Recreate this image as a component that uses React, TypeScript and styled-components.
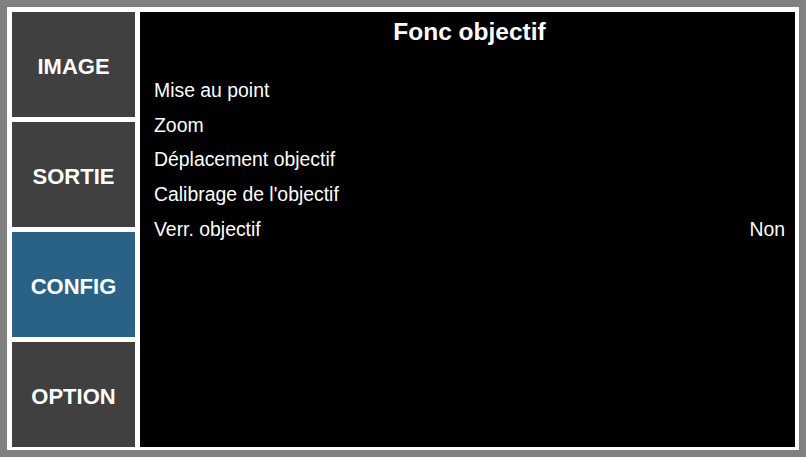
import styled, { createGlobalStyle } from 'styled-components';

const GlobalStyle = createGlobalStyle`
    html, body {
        margin: 0;
        padding: 0;
        background: #808080;
    }
    body {
        font-family: "Liberation Sans", Arial, sans-serif;
    }
`;

const Frame = styled.div`
    width: 806px;
    height: 457px;
    box-sizing: border-box;
    padding: 7px;
    background: #808080;
`;

const Screen = styled.div`
    height: 100%;
    box-sizing: border-box;
    padding: 5px 4px 3px 5px;
    background: #ffffff;
    display: flex;
    gap: 5px;
`;

const Tabs = styled.nav`
    width: 123px;
    display: grid;
    grid-template-rows: repeat(4, 1fr);
    gap: 5px;
`;

const Tab = styled.div<{ $active?: boolean }>`
    display: flex;
    align-items: center;
    justify-content: center;
    padding-top: 5px;
    background: ${p => (p.$active ? '#2a6285' : '#404040')};
    color: #ffffff;
    font-weight: bold;
    font-size: 22px;
`;

const Panel = styled.section`
    flex: 1;
    background: #000000;
    color: #ffffff;
    display: flex;
    flex-direction: column;
    padding: 0 10px 0 14px;
`;

const Title = styled.h1`
    margin: 0;
    padding-top: 6px;
    height: 61px;
    box-sizing: border-box;
    text-align: center;
    font-size: 24.5px;
    font-weight: bold;
`;

const Row = styled.div`
    display: flex;
    justify-content: space-between;
    align-items: center;
    height: 34.8px;
    font-size: 19.4px;
`;

const menu = ['IMAGE', 'SORTIE', 'CONFIG', 'OPTION'];

const rows = [
    { label: 'Mise au point' },
    { label: 'Zoom' },
    { label: 'Déplacement objectif' },
    { label: "Calibrage de l'objectif" },
    { label: 'Verr. objectif', value: 'Non' },
];

const App = () => {
    return (
        <>
            <GlobalStyle />
            <Frame>
                <Screen>
                    <Tabs>
                        {menu.map(name => (
                            <Tab key={name} $active={name === 'CONFIG'}>{name}</Tab>
                        ))}
                    </Tabs>
                    <Panel>
                        <Title>Fonc objectif</Title>
                        {rows.map(r => (
                            <Row key={r.label}>
                                <span>{r.label}</span>
                                {r.value && <span>{r.value}</span>}
                            </Row>
                        ))}
                    </Panel>
                </Screen>
            </Frame>
        </>
    );
};

export default App;
